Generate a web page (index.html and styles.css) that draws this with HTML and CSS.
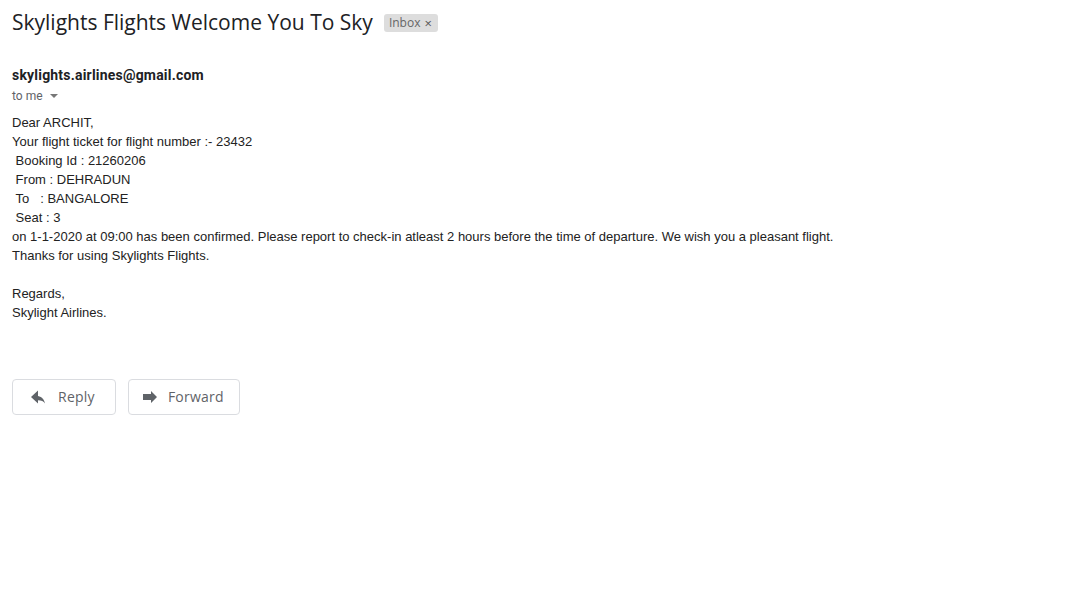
FILE: index.html
```html
<!DOCTYPE html>
<html>
<head>
<meta charset="utf-8">
<link rel="stylesheet" href="styles.css">
</head>
<body>
<div class="mail">
  <div class="subject-row">
    <h1 class="subject">Skylights Flights Welcome You To Sky</h1>
    <span class="chip">Inbox <span class="chip-x">×</span></span>
  </div>
  <div class="sender">skylights.airlines@gmail.com</div>
  <div class="to">to me <span class="caret"></span></div>
  <div class="body">
    <div>Dear ARCHIT,</div>
    <div>Your flight ticket for flight number :- 23432</div>
    <div>&nbsp;Booking Id : 21260206</div>
    <div>&nbsp;From : DEHRADUN</div>
    <div>&nbsp;To &nbsp; : BANGALORE</div>
    <div>&nbsp;Seat : 3</div>
    <div>on 1-1-2020 at 09:00 has been confirmed. Please report to check-in atleast 2 hours before the time of departure. We wish you a pleasant flight.</div>
    <div>Thanks for using Skylights Flights.</div>
    <div>&nbsp;</div>
    <div>Regards,</div>
    <div>Skylight Airlines.</div>
  </div>
  <div class="actions">
    <button class="btn btn-reply">
      <svg class="icon" viewBox="0 0 18 18" width="18" height="18"><path d="M9 5.5V2.5L2 9l7 6.5v-3.3c3.4 0 5.6 1.1 7 3.3-0.6-3.6-2.8-6.8-7-7.5z" fill="#5f6368"/></svg>
      <span class="btn-label">Reply</span>
    </button>
    <button class="btn btn-forward">
      <svg class="icon" viewBox="0 0 18 18" width="18" height="18"><path d="M0 6h8V3l6 6-6 6v-3H0z" fill="#5f6368"/></svg>
      <span class="btn-label">Forward</span>
    </button>
  </div>
</div>
</body>
</html>
```
FILE: styles.css
```css
html, body {
  margin: 0;
  padding: 0;
  background: #fff;
}
.mail {
  padding: 8px 12px 0 12px;
}
.subject-row {
  display: flex;
  align-items: center;
  gap: 11px;
}
.subject {
  margin: 0;
  font-family: "Open Sans", sans-serif;
  font-weight: 400;
  font-size: 21px;
  line-height: 28px;
  color: #202124;
}
.chip {
  display: inline-flex;
  align-items: center;
  gap: 4px;
  background: #ddd;
  color: #666;
  font-family: "Open Sans", sans-serif;
  font-size: 12px;
  line-height: 18px;
  padding: 0 6px 0 5px;
  border-radius: 3px;
  margin-top: 2px;
}
.chip-x {
  color: #555;
  font-size: 13px;
}
.sender {
  margin-top: 29px;
  font-family: "Roboto", sans-serif;
  font-weight: 700;
  font-size: 14px;
  letter-spacing: 0.2px;
  line-height: 20px;
  color: #202124;
}
.to {
  display: flex;
  align-items: center;
  gap: 6px;
  margin-top: 1px;
  font-family: "Roboto", sans-serif;
  font-size: 12px;
  line-height: 20px;
  color: #5f6368;
}
.caret {
  width: 0;
  height: 0;
  border-left: 4px solid transparent;
  border-right: 4px solid transparent;
  border-top: 4px solid #777;
  margin-left: 1px;
}
.body {
  margin-top: 7px;
  font-family: "Liberation Sans", Arial, sans-serif;
  font-size: 13px;
  line-height: 19px;
  color: #222;
}
.actions {
  display: flex;
  gap: 12px;
  margin-top: 57px;
}
.btn {
  display: flex;
  align-items: center;
  height: 36px;
  background: #fff;
  border: 1px solid #dadce0;
  border-radius: 4px;
  font-family: "Open Sans", sans-serif;
  font-size: 14px;
  font-weight: 500;
  letter-spacing: 0.25px;
  color: #5f6368;
  cursor: pointer;
}
.btn-label {
  margin-top: -2px;
}
.btn-reply {
  gap: 11px;
  padding: 0 20px 0 16px;
}
.btn-forward {
  gap: 7px;
  padding: 0 15px 0 14px;
}
.icon {
  display: block;
}
```
